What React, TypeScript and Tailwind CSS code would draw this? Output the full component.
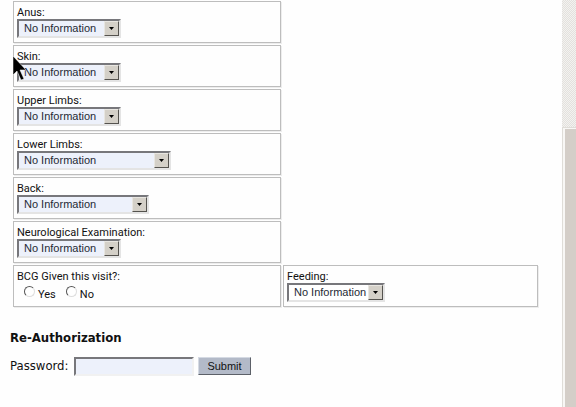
import { useId } from "react";

type SelectFieldProps = {
  label: string;
  width?: string;
  background?: string;
};

function SelectField({ label, width = "w-[104px]", background = "bg-[#edf1fb]" }: SelectFieldProps) {
  const id = useId();
  return (
    <div className="h-[42px] border border-[#bdbdbd] px-[3px] pt-1 shadow-[1px_1px_0_#ededed]">
      <label htmlFor={id} className="block h-[13px] text-[11px] leading-[14px]">
        {label}
      </label>
      <div className={`relative h-[19px] ${width}`}>
        <select
          id={id}
          className={`block h-full w-full appearance-none rounded-none border-2 border-t-[#77777b] border-l-[#77777b] border-r-[#e4e4e4] border-b-[#e4e4e4] pl-[5px] font-['Liberation_Sans',Arial,sans-serif] text-[11px] leading-[15px] text-[#252a35] outline-none ${background}`}
        >
          <option>No Information</option>
        </select>
        <span className="pointer-events-none absolute top-[2px] right-[2px] flex h-[15px] w-[15px] items-center justify-center border border-t-[#e8e6e1] border-l-[#e8e6e1] border-r-[#55534f] border-b-[#55534f] bg-[#d4d0c8]">
          <svg width="5" height="3" viewBox="0 0 5 3" aria-hidden="true">
            <path d="M0 0h5L2.500 3z" fill="#000" />
          </svg>
        </span>
      </div>
    </div>
  );
}

function Radio({ label, name }: { label: string; name: string }) {
  return (
    <label className="flex items-start gap-[3px] text-[11px] leading-[14px]">
      <input
        type="radio"
        name={name}
        className="h-[11px] w-[11px] appearance-none rounded-full border border-t-[#555] border-l-[#555] border-r-[#ddd] border-b-[#ddd] bg-white checked:bg-[#444]"
      />
      <span className="pt-[2px]">{label}</span>
    </label>
  );
}

function ScrollBar() {
  return (
    <div className="flex w-[14px] shrink-0 flex-col" aria-hidden="true">
      <div className="h-[127px] bg-[repeating-conic-gradient(#e3e1dd_0_25%,#f3f2f0_0_50%)] bg-[length:2px_2px]" />
      <div className="grow border-t border-l border-[#dfddd8] bg-[#d4cec8] shadow-[inset_2px_1px_0_#f8f7f5]" />
    </div>
  );
}

export default function App() {
  return (
    <div className="flex min-h-screen bg-[#fefefe] font-['Roboto',Tahoma,sans-serif] text-[#111]">
      <main className="relative min-w-0 grow">
        <form onSubmit={(e) => e.preventDefault()}>
          <div className="grid grid-cols-[268fr_255fr] gap-[2px] pt-px pr-6 pl-[13px]">
            <div className="col-start-1"><SelectField label="Anus:" /></div>
            <div className="col-start-1"><SelectField label="Skin:" /></div>
            <div className="col-start-1"><SelectField label="Upper Limbs:" /></div>
            <div className="col-start-1"><SelectField label="Lower Limbs:" width="w-[154px]" /></div>
            <div className="col-start-1"><SelectField label="Back:" width="w-[132px]" /></div>
            <div className="col-start-1"><SelectField label="Neurological Examination:" /></div>
            <fieldset className="col-start-1 h-[42px] border border-[#bdbdbd] px-[3px] pt-1 shadow-[1px_1px_0_#ededed]">
              <legend className="float-left h-4 w-full text-[11px] leading-[14px]">BCG Given this visit?:</legend>
              <div className="clear-both flex gap-[10px] pl-[7px]">
                <Radio name="bcg" label="Yes" />
                <Radio name="bcg" label="No" />
              </div>
            </fieldset>
            <SelectField label="Feeding:" width="w-[98px]" background="bg-white" />
          </div>
          <div className="px-[10px] pt-[22px] font-['DejaVu_Sans_Condensed','DejaVu_Sans',sans-serif]">
            <h2 className="text-[13px] leading-[18px] font-bold">Re-Authorization</h2>
            <div className="flex items-center pt-[9px]">
              <label htmlFor="password" className="w-16 shrink-0 text-[13px] leading-5">
                Password:
              </label>
              <input
                id="password"
                type="password"
                className="h-[19px] w-[120px] border-2 border-t-[#77777b] border-l-[#77777b] border-r-[#f1f1f1] border-b-[#f1f1f1] bg-[#edf1fb] outline-none"
              />
              <button
                type="submit"
                className="ml-1 h-[18px] w-[53px] border border-t-[#d5dae3] border-l-[#d5dae3] border-r-[#5c6068] border-b-[#5c6068] bg-[#b3bac8] font-['Liberation_Sans',Arial,sans-serif] text-[11px] leading-4"
              >
                Submit
              </button>
            </div>
          </div>
        </form>
        <svg
          className="pointer-events-none absolute top-[55px] left-[12px]"
          width="14"
          height="26"
          viewBox="0 0 14 26"
          aria-hidden="true"
        >
          <path d="M1 1v19l4-4 4 9 3-1-4-9h6z" fill="#000" stroke="#fff" strokeWidth="0.500" />
        </svg>
      </main>
      <ScrollBar />
    </div>
  );
}
